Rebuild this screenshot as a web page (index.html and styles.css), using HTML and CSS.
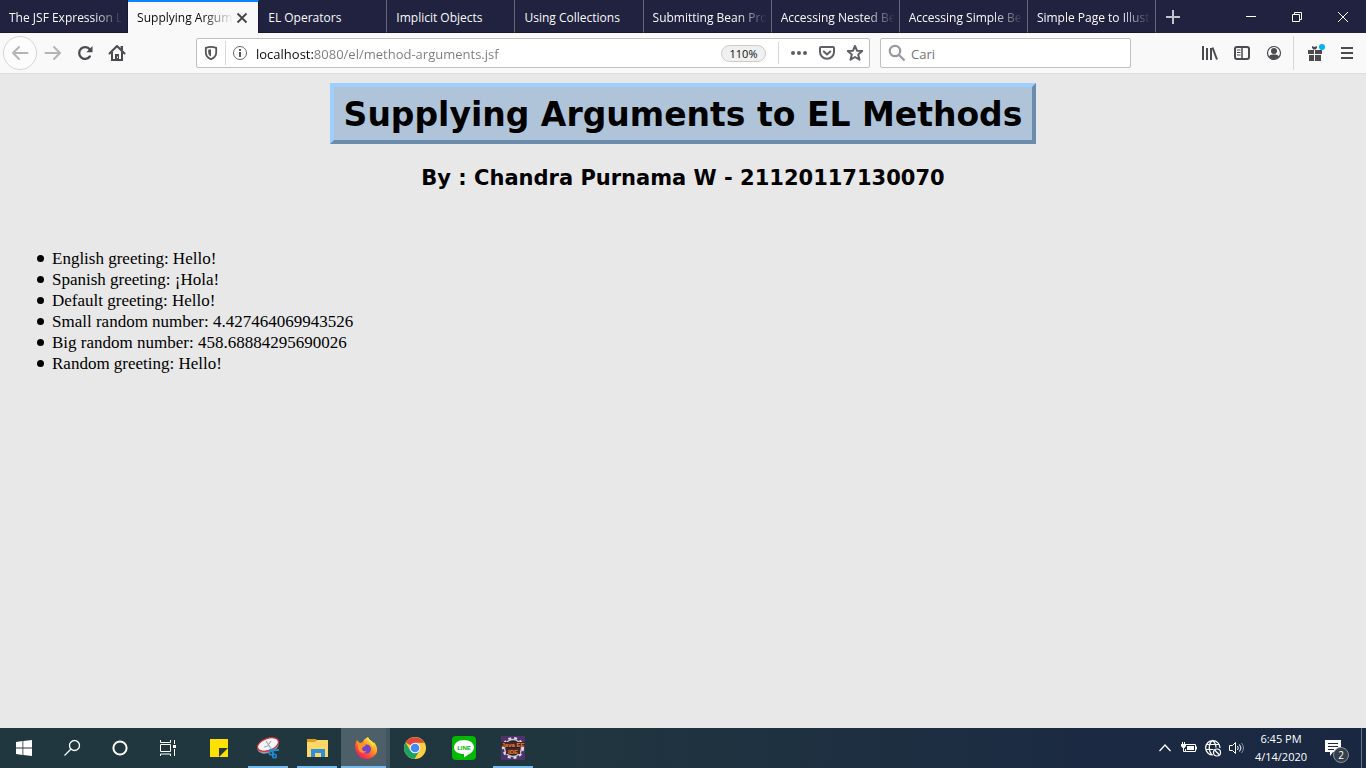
FILE: index.html
```html
<!DOCTYPE html>
<html lang="en">
<head>
<meta charset="utf-8">
<title>Supplying Arguments to EL Methods</title>
<link rel="stylesheet" href="styles.css">
</head>
<body>
<header class="titlebar">
  <nav class="tabs" aria-label="Tabs">
    <button class="tab"><span class="tab-title fade">The JSF Expression La</span></button>
    <div class="tab tab-active"><span class="tab-title fade">Supplying Argum</span><button class="tab-close" aria-label="Close tab"><svg width="12" height="12" viewBox="0 0 12 12"><path d="M1.500 1.500l9 9M10.500 1.500l-9 9" stroke="#444" stroke-width="1.800" fill="none"/></svg></button></div>
    <button class="tab"><span class="tab-title">EL Operators</span></button>
    <button class="tab"><span class="tab-title">Implicit Objects</span></button>
    <button class="tab"><span class="tab-title">Using Collections</span></button>
    <button class="tab"><span class="tab-title fade">Submitting Bean Pro</span></button>
    <button class="tab"><span class="tab-title fade">Accessing Nested Be</span></button>
    <button class="tab"><span class="tab-title fade">Accessing Simple Be</span></button>
    <button class="tab"><span class="tab-title fade">Simple Page to Illustr</span></button>
  </nav>
  <button class="new-tab" aria-label="New tab"><svg width="16" height="16" viewBox="0 0 16 16"><path d="M8 1v14M1 8h14" stroke="#c3c3cc" stroke-width="2"/></svg></button>
  <div class="window-controls">
    <button aria-label="Minimize"><svg width="12" height="12" viewBox="0 0 12 12"><path d="M1 5.500h10" stroke="#fff"/></svg></button>
    <button aria-label="Restore"><svg width="12" height="12" viewBox="0 0 12 12" fill="none" stroke="#fff"><path d="M1.500 3.500h7v7h-7zM3.500 3.500v-2h7v7h-2"/></svg></button>
    <button aria-label="Close"><svg width="12" height="12" viewBox="0 0 12 12"><path d="M1 1l10 10M11 1L1 11" stroke="#fff"/></svg></button>
  </div>
</header>

<div class="toolbar">
  <div class="nav-buttons">
    <button class="back" aria-label="Back"><svg width="18" height="16" viewBox="0 0 18 16" fill="none" stroke="#b5b5b5" stroke-width="2" stroke-linecap="round" stroke-linejoin="round"><path d="M8 2L2 8l6 6M2 8h14.500"/></svg></button>
    <button class="tool" aria-label="Forward"><svg width="18" height="16" viewBox="0 0 18 16" fill="none" stroke="#b5b5b5" stroke-width="2" stroke-linecap="round" stroke-linejoin="round"><path d="M10 2l6 6-6 6M16 8H1.500"/></svg></button>
    <button class="tool" aria-label="Reload"><svg width="16" height="16" viewBox="0 0 16 16"><path d="M12.800 11.500A5.900 5.900 0 1 1 12.800 4.400" fill="none" stroke="#4a4a4f" stroke-width="2.300" stroke-linecap="round"/><path d="M15.500 1v6.200H9.300z" fill="#4a4a4f"/></svg></button>
    <button class="tool" aria-label="Home"><svg width="18" height="18" viewBox="0 0 18 18"><path d="M1.500 9.500L9 2l7.500 7.500" fill="none" stroke="#4a4a4f" stroke-width="2" stroke-linecap="round" stroke-linejoin="round"/><path d="M3 9l2-2v8h2v-5h4v5h2V7l2 2v8H3zM12.500 2H15v5l-2.500-2.500z" fill="#4a4a4f"/><path d="M7.500 10.500h3V16h-3z" fill="#4a4a4f"/><path d="M9 12.500h1V14H9z" fill="#f9f9fa"/></svg></button>
  </div>
  <form class="field url">
    <button type="button" class="field-icon shield" aria-label="Tracking protection"><svg width="14" height="16" viewBox="0 0 14 16"><path d="M7 1.800c1.700 0 3.500.4 5.200 1.100v4.500c0 3-2 5.300-5.200 6.800-3.200-1.500-5.200-3.800-5.200-6.800V2.900C3.500 2.200 5.300 1.800 7 1.800z" fill="none" stroke="#555558" stroke-width="1.800" stroke-linejoin="round"/><path d="M7 4.200V11.600C5 10.500 4.200 9 4.200 7.200V4.700z" fill="#555558"/></svg></button>
    <button type="button" class="field-icon" aria-label="Site information"><svg width="16" height="16" viewBox="0 0 16 16"><circle cx="8" cy="8" r="6.500" fill="none" stroke="#6a6a6e"/><path d="M7 7h2v5H7zM7 4h2v2H7z" fill="#5a5a5e"/></svg></button>
    <input class="address" type="text" aria-label="Address" value="localhost:8080/el/method-arguments.jsf">
    <button type="button" class="zoom">110%</button>
    <span class="field-line"></span>
    <button type="button" class="field-icon" aria-label="Page actions"><svg width="16" height="16" viewBox="0 0 16 16" fill="#5f5f63"><circle cx="2" cy="8" r="2"/><circle cx="8" cy="8" r="2"/><circle cx="14" cy="8" r="2"/></svg></button>
    <button type="button" class="field-icon" aria-label="Save to Pocket"><svg width="16" height="16" viewBox="0 0 16 16" fill="none" stroke="#5f5f63" stroke-width="2" stroke-linecap="round" stroke-linejoin="round"><path d="M2 2h12a1 1 0 0 1 1 1v4a7 6.800 0 0 1-14 0V3a1 1 0 0 1 1-1z"/><path d="M4.800 6.500L8 9.500l3.200-3"/></svg></button>
    <button type="button" class="field-icon" aria-label="Bookmark"><svg width="18" height="18" viewBox="0 0 18 18" fill="none" stroke="#5f5f63" stroke-width="2" stroke-linejoin="round"><path d="M9 2l2 4.700 5.200.4-4 3.400 1.300 5.200L9 13l-4.500 2.700 1.300-5.200-4-3.400L7 6.700z"/></svg></button>
  </form>
  <form class="field search" role="search">
    <svg width="18" height="18" viewBox="0 0 18 18" fill="none" stroke="#98989b" stroke-width="2.200"><circle cx="7" cy="7" r="5.200"/><path d="M10.800 10.800L16.500 16.500"/></svg>
    <input type="text" aria-label="Search" placeholder="Cari">
  </form>
  <div class="menu-buttons">
    <button class="tool" aria-label="Library"><svg width="16" height="16" viewBox="0 0 16 16" stroke="#4a4a4f" stroke-width="2" fill="none"><path d="M1 1v14M5 3v12M9 3v12"/><path d="M10.500 2.500L15 14.500"/></svg></button>
    <button class="tool" aria-label="Sidebars"><svg width="16" height="16" viewBox="0 0 16 16" stroke="#4a4a4f" fill="none"><rect x="1" y="2" width="14" height="12" rx="2" stroke-width="2"/><path d="M8 2v12" stroke-width="1.500"/><path d="M3 5h3.500M3 7.500h3.500M3 10h3.500"/></svg></button>
    <button class="tool" aria-label="Account"><svg width="16" height="16" viewBox="0 0 16 16"><circle cx="8" cy="8" r="6.500" fill="none" stroke="#4a4a4f" stroke-width="1.200"/><circle cx="8" cy="6" r="3" fill="#4a4a4f"/><path d="M3 11.500c1-2 2.500-1.500 3.500-2h3c1 .5 2.500 0 3.500 2-2.600 3.500-7.400 3.500-10 0z" fill="#4a4a4f"/></svg></button>
    <span class="toolbar-line"></span>
    <button class="tool" aria-label="What's new"><svg width="20" height="20" viewBox="0 0 20 20"><path d="M3 7h6v4H3zM10 7h7v4h-7zM4 12h5v6H4zM10 12h6v6h-6zM7 3l2.500 1L12 3v2l-1.500 1.500h-2L7 5z" fill="#4a4a4f"/><circle cx="18" cy="4" r="3" transform="translate(-1 0)" fill="#00b3f4"/></svg></button>
    <button class="tool" aria-label="Open menu"><svg width="14" height="16" viewBox="0 0 14 16"><path d="M1 3h12M1 8h12M1 13h12" stroke="#4a4a4f" stroke-width="2"/></svg></button>
  </div>
</div>

<main class="page">
  <h1>Supplying Arguments to EL Methods</h1>
  <h2>By : Chandra Purnama W - 21120117130070</h2>
  <ul class="results">
    <li>English greeting: Hello!</li>
    <li>Spanish greeting: ¡Hola!</li>
    <li>Default greeting: Hello!</li>
    <li>Small random number: 4.427464069943526</li>
    <li>Big random number: 458.68884295690026</li>
    <li>Random greeting: Hello!</li>
  </ul>
</main>

<footer class="taskbar">
  <div class="launchers">
    <button class="launch" aria-label="Start"><svg width="16" height="16" viewBox="0 0 16 16" fill="#fff"><path d="M0 2l6.500-1v6.500H0zM7.300.9L16 0v7.500H7.300zM0 8.400h6.500V15L0 14zM7.300 8.400H16V16l-8.700-1z"/></svg></button>
    <button class="launch" aria-label="Search"><svg width="18" height="18" viewBox="0 0 18 18" fill="none" stroke="#fff" stroke-width="1.300"><circle cx="11.500" cy="6.500" r="5"/><path d="M8 10L1.500 16.500"/></svg></button>
    <button class="launch" aria-label="Cortana"><svg width="18" height="18" viewBox="0 0 18 18" fill="none" stroke="#fff" stroke-width="2"><circle cx="9" cy="9" r="6.600"/></svg></button>
    <button class="launch" aria-label="Task view"><svg width="18" height="18" viewBox="0 0 18 18" fill="none" stroke="#fff"><path d="M1.500 1v2.500h10V1M1.500 5.500h10v7h-10zM1.500 17v-2h10v2M15.500 1v4M15.500 10v7"/><path d="M14 6h3v3h-3z" fill="#fff" stroke="none"/></svg></button>
  </div>
  <div class="apps">
    <button class="app" aria-label="Sticky Notes"><svg width="24" height="24" viewBox="0 0 24 24"><path d="M3 3h18v18H3z" fill="#ffe100"/><path d="M12 12h9l-9 9z" fill="#263840"/></svg></button>
    <button class="app app-open" aria-label="Snipping Tool"><svg width="24" height="24" viewBox="0 0 24 24"><ellipse cx="12" cy="10.500" rx="11" ry="6.500" transform="rotate(-20 12 10.500)" fill="#949da3"/><ellipse cx="12" cy="8.500" rx="11" ry="6" transform="rotate(-20 12 8.500)" fill="#f4f5f6" stroke="#ca3038" stroke-width="1.200"/><path d="M10 5l6 9M8 11l5-1.500M13 8l2-3" stroke="#9baab3" stroke-width="1.200"/><path d="M13 14.500l10-.5M17 13v7" stroke="#2389cb" stroke-width="2"/><circle cx="15" cy="17" r="1.800" fill="none" stroke="#2389cb" stroke-width="1.600"/><circle cx="18.500" cy="20" r="1.800" fill="none" stroke="#2389cb" stroke-width="1.600"/></svg></button>
    <button class="app app-open" aria-label="File Explorer"><svg width="24" height="24" viewBox="0 0 24 24"><path d="M2 3h9l1 2h11v16H2z" fill="#dda01a"/><path d="M2 6h8l2-2h11v17H2z" fill="#ffd766"/><path d="M6 13h14v8h-4v-4h-6v4H6z" fill="#2c91d8"/></svg></button>
    <button class="app app-open app-current" aria-label="Firefox"><svg width="24" height="24" viewBox="0 0 24 24"><defs><linearGradient id="fox" x1=".85" y1=".1" x2=".2" y2=".95"><stop offset="0" stop-color="#fff044"/><stop offset=".4" stop-color="#ff9820"/><stop offset=".7" stop-color="#ff4b38"/><stop offset="1" stop-color="#ef1671"/></linearGradient></defs><path d="M3 4l3 3 3-1c0-2 3-4 5-5 0 3 4 4 5 7l1-2c4 5 4 10 1 13-5 6-15 5-18-2C0 12 1 7 3 4z" fill="url(#fox)"/><circle cx="12.500" cy="13" r="4.500" fill="#7145ca"/><path d="M3 6c2 1 5 2 9 3-1 2-4 1-4 4 0 2 3 3 5 2-4 4-9 1-9-4z" fill="#ff922b"/><path d="M14 1c-3 4 5 5 4 10l2-3c-1-3-5-4-6-7z" fill="#ffe344"/></svg></button>
    <button class="app" aria-label="Chrome"><svg width="24" height="24" viewBox="0 0 24 24"><circle cx="12" cy="12" r="11" fill="#ffcd41"/><path d="M12 6.700L7.400 9.300 2.500 6.500A11 11 0 0 1 21.500 6.700z" fill="#df493c"/><path d="M2.500 6.500A11 11 0 0 0 11.500 23l5-8.500L12 17l-5-3z" fill="#1ba260"/><circle cx="12" cy="12" r="5.300" fill="#f5f7fa"/><circle cx="12" cy="12" r="4.300" fill="#4788f4"/></svg></button>
    <button class="app" aria-label="LINE"><svg width="24" height="24" viewBox="0 0 24 24"><rect width="24" height="24" rx="4" fill="#00b900"/><path d="M12 4c6 0 10 3 10 7.500S17 18 12 21.500V18C6 18 2 15.500 2 11.500S6 4 12 4z" fill="#fff"/><text x="12" y="14" text-anchor="middle" class="line-label">LINE</text></svg></button>
    <button class="app app-open" aria-label="Java EE IDE"><svg width="24" height="24" viewBox="0 0 24 24"><path d="M0 0h24v24H0z" fill="#4d326c"/><circle cx="12" cy="12" r="8.500" fill="#291e2b" stroke="#c5c5c5" stroke-width="1.500"/><circle cx="12" cy="12" r="10" fill="none" stroke="#ddd" stroke-width="2" stroke-dasharray="3 3"/><path d="M0 6h24v5H0zM5 12h14v6H5z" fill="#472629"/><text x="12" y="11" text-anchor="middle" class="ide-label">Java EE</text><text x="12" y="18" text-anchor="middle" class="ide-label">IDE</text></svg></button>
  </div>
  <div class="tray">
    <button aria-label="Show hidden icons"><svg width="16" height="16" viewBox="0 0 16 16" fill="none" stroke="#fff" stroke-width="1.300"><path d="M2.500 11L8 5l5.500 6"/></svg></button>
    <button aria-label="Battery"><svg width="18" height="16" viewBox="0 0 18 16" fill="none" stroke="#fff"><path d="M6 4.500h9.500v7h-10V9M16.500 6.500v3"/><path d="M7 6h7v4H7z" fill="#fff" stroke="none"/><path d="M2.500 2v2M4.500 2v2" /><path d="M1 4h5v2L4.500 8h-2L1 6z" fill="#fff" stroke="none"/><path d="M3.500 8v3.500h2"/></svg></button>
    <button aria-label="Network"><svg width="18" height="18" viewBox="0 0 18 18" fill="none" stroke="#fff" stroke-width="1.200"><path d="M9 16A7.200 7.200 0 1 1 16 9M2.500 5.500h13M1.500 10.500h8M8 16C3.500 10 5 4 8.500 1.500c2.500 2 3.500 5 3.500 7"/><circle cx="13" cy="13.500" r="3.500"/><path d="M10.500 11l5 5"/></svg></button>
    <button aria-label="Volume"><svg width="18" height="16" viewBox="0 0 18 16" fill="none" stroke="#fff"><path d="M1.500 5.500h3l3-3v11l-3-3h-3zM9.500 6q1.500 2 0 4M11.500 4.500q3 3.500 0 7"/><path d="M13.500 3q4 5 0 10" stroke="#8792a1"/></svg></button>
    <div class="clock"><time>6:45 PM</time><time>4/14/2020</time></div>
    <button class="notices" aria-label="2 notifications"><svg width="16" height="18" viewBox="0 0 16 18"><path d="M0 1h16v12H8l-3 4v-4H0z" fill="#fff"/><path d="M3 4.500h10M3 7.500h10M3 10.500h6" stroke="#1b2942"/></svg><span class="badge">2</span></button>
    <span class="desktop-edge"></span>
  </div>
</footer>
</body>
</html>
```

FILE: styles.css
```css
* { box-sizing: border-box; }

body {
  margin: 0;
  min-height: 100vh;
  display: flex;
  flex-direction: column;
  font-family: "Open Sans", "Noto Sans", sans-serif;
  font-size: 12px;
  background: #e8e8e8;
}

button {
  display: flex;
  align-items: center;
  justify-content: center;
  padding: 0;
  border: 0;
  background: none;
  color: inherit;
  font: inherit;
}

svg { display: block; flex: none; }

/* Tab strip */
.titlebar {
  display: flex;
  height: 33px;
  background: #20223f;
  color: #f9f9fa;
}
.tabs { display: flex; flex: 1; min-width: 0; }
.tab {
  display: flex;
  align-items: center;
  justify-content: flex-start;
  flex: 1 1 0;
  width: 0;
  min-width: 0;
  padding: 2px 4px 0 9px;
  border-right: 1px solid #66677c;
  border-bottom: 1px solid #151735;
  font-size: 12px;
}
.tab:first-child { border-right-color: #151735; }
.tab-title {
  flex: 1;
  min-width: 0;
  overflow: hidden;
  white-space: nowrap;
  text-align: left;
}
.fade {
  -webkit-mask-image: linear-gradient(to left, transparent, #000 30px);
  mask-image: linear-gradient(to left, transparent, #000 30px);
}
.tab-active {
  padding-top: 0;
  padding-right: 7px;
  border-top: 2px solid #0a84ff;
  border-right-color: #151735;
  border-bottom: 0;
  background: #f9f9fa;
  color: #0c0c0d;
}
.tab-close { width: 18px; height: 18px; }
.new-tab { width: 34px; }
.window-controls { display: flex; width: 176px; padding-left: 38px; }
.window-controls button { flex: 1; }

/* Toolbar */
.toolbar {
  display: flex;
  align-items: center;
  height: 41px;
  padding: 0 3px;
  background: #f9f9fa;
  border-bottom: 1px solid #dcdcdc;
}
.nav-buttons, .menu-buttons { display: flex; align-items: center; flex: none; }
.tool { width: 32px; height: 32px; }
.back {
  width: 34px;
  height: 34px;
  border: 1px solid #d5d5d6;
  border-radius: 50%;
  background: #fcfcfc;
}
.field {
  display: flex;
  align-items: center;
  height: 30px;
  border: 1px solid #c0c0c2;
  border-radius: 2px;
  background: #fff;
}
.field input {
  flex: 1;
  min-width: 0;
  padding: 2px 0 0;
  border: 0;
  outline: 0;
  background: none;
  font: 13px "Open Sans", "Noto Sans", sans-serif;
  color: #737373;
}
.url { flex: 1; margin-left: 63px; }
.field-icon { width: 28px; height: 24px; }
.shield { width: 29px; border-right: 1px solid #d8d8d9; }
.field .address {
  margin-left: 2px;
  color: transparent;
  background: linear-gradient(to right, #0c0c0d 57px, #7b7b7c 57px);
  -webkit-background-clip: text;
  background-clip: text;
}
.zoom {
  width: 45px;
  height: 17px;
  margin-right: 12px;
  border: 1px solid #cbcbcb;
  border-radius: 9px;
  background: #f0f0f1;
  font-size: 11px;
  color: #0c0c0d;
}
.field-line { width: 1px; height: 22px; margin-right: 6px; background: #d8d8d9; }
.search { width: 251px; margin: 0 63px 0 10px; padding-left: 7px; gap: 5px; }
.field input::placeholder { color: #737373; opacity: 1; }
.toolbar-line { width: 1px; height: 34px; margin: 0 5px 0 3px; background: #d8d8d9; }

/* Document */
.page { flex: 1; padding: 9px 12px 0; }
.page h1 {
  width: fit-content;
  margin: 0 auto;
  padding: 6px 10px 3px;
  border: 4px solid;
  border-color: #9fcfff #6b8cab #6b8cab #9fcfff;
  background: #b0c4d9;
  font: bold 33px/44px Verdana, "DejaVu Sans", sans-serif;
  color: #000;
}
.page h2 {
  margin: 21px 0 0;
  text-align: center;
  font: bold 21px/26px Verdana, "DejaVu Sans", sans-serif;
}
.results {
  margin: 57px 0 0;
  padding-left: 40px;
  list-style: none;
  font: 17px/21px "Liberation Serif", "Times New Roman", serif;
}
.results li::before {
  content: "";
  display: inline-block;
  width: 7px;
  height: 7px;
  margin: 0 8px 0 -15px;
  border-radius: 50%;
  background: #000;
  vertical-align: 2px;
}

/* Taskbar */
.taskbar {
  display: flex;
  height: 40px;
  background: linear-gradient(to right, #213740, #20363f 40%, #1b2a42 80%, #1a2741);
  color: #fff;
}
.launchers, .apps, .tray { display: flex; }
.launch { width: 48px; }
.apps { margin-left: 2px; }
.app { width: 49px; }
.app-open {
  background: linear-gradient(#76b9ed, #76b9ed) center bottom / 40px 2px no-repeat;
}
.app-current {
  border-right: 4px solid #405560;
  padding-left: 4px;
  background: linear-gradient(#76b9ed, #76b9ed) center bottom / 100% 2px no-repeat #4d6069;
}
.line-label { font: bold 6px "Liberation Sans", sans-serif; fill: #00b900; }
.ide-label { font: bold 6px "Liberation Sans", sans-serif; fill: #f07e32; }
.tray { margin-left: auto; }
.tray button { width: 24px; }
.clock {
  display: flex;
  flex-direction: column;
  align-items: center;
  justify-content: center;
  width: 64px;
  line-height: 18px;
  font-size: 11px;
}
.tray .notices { position: relative; width: 40px; }
.badge {
  position: absolute;
  left: 20px;
  top: 19px;
  width: 16px;
  height: 16px;
  border: 1px solid #8b929b;
  border-radius: 50%;
  background: #36404b;
  font-size: 10px;
  line-height: 14px;
}
.desktop-edge { width: 5px; margin-left: 8px; border-left: 1px solid #6b7482; }
```
